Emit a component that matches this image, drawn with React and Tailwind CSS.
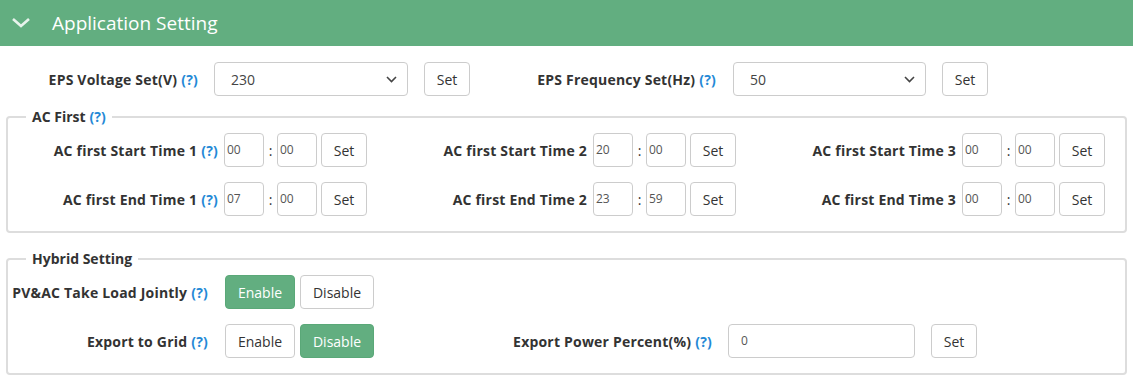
import React, { useState } from 'react';

const Help = () => <span className="ml-1 font-bold text-[#2489d6]">(?)</span>;

const SetButton = ({ className }) => (
  <button className={`h-[34px] w-[46px] rounded border border-[#ccc] bg-white text-[14px] text-[#333] ${className || ''}`}>
    Set
  </button>
);

const Select = ({ value, width }) => (
  <div className={`relative h-[34px] ${width} rounded border border-[#ccc] bg-white`}>
    <span className="absolute left-4 top-[6px] text-[14px] text-[#444]">{value}</span>
    <svg className="absolute right-[10px] top-[13px]" width="11" height="7" viewBox="0 0 11 7">
      <path d="M1 1l4.5 4.5L10 1" fill="none" stroke="#444" strokeWidth="1.6" />
    </svg>
  </div>
);

const TimeBox = ({ value }) => (
  <div className="flex h-[34px] w-[40px] items-center rounded border border-[#ccc] bg-white pl-[2px] text-[12px] text-[#555]">
    {value}
  </div>
);

const TimeItem = ({ label, help, h, m }) => (
  <div className="flex w-[369px] items-center">
    <div className="w-[210px] text-right text-[14px] font-bold tracking-[0.2px] text-[#333]">
      {label}
      {help && <Help />}
    </div>
    <div className="ml-[6px] flex items-center">
      <TimeBox value={h} />
      <span className="w-[13px] text-center text-[14px] text-[#333]">:</span>
      <TimeBox value={m} />
      <SetButton className="ml-[4px]" />
    </div>
  </div>
);

const Toggle = ({ on, setOn }) => (
  <div className="ml-[17px] flex gap-[5px]">
    <button
      onClick={() => setOn(true)}
      className={`h-[34px] w-[70px] rounded border text-[14px] ${on ? 'border-[#5aa878] bg-[#62ae80] text-white' : 'border-[#ccc] bg-white text-[#333]'}`}
    >
      Enable
    </button>
    <button
      onClick={() => setOn(false)}
      className={`h-[34px] w-[74px] rounded border text-[14px] ${!on ? 'border-[#5aa878] bg-[#62ae80] text-white' : 'border-[#ccc] bg-white text-[#333]'}`}
    >
      Disable
    </button>
  </div>
);

export default function App() {
  const [jointly, setJointly] = useState(true);
  const [exportGrid, setExportGrid] = useState(false);

  return (
    <div className="h-[381px] w-[1133px] overflow-hidden bg-white font-['Open_Sans',sans-serif] text-[#333]">
      <div className="flex h-[46px] items-center bg-[#62ae80] text-white">
        <svg className="ml-[11px]" width="20" height="12" viewBox="0 0 20 12">
          <path d="M2 2l8 7 8-7" fill="none" stroke="#e8f3ec" strokeWidth="2.6" />
        </svg>
        <span className="ml-[21px] text-[19px] leading-none">Application Setting</span>
      </div>

      <div className="border-b border-[#e6e6e6] pb-[8px]">
        <div className="mt-4 flex items-center">
          <div className="w-[198px] text-right text-[14px] font-bold tracking-[0.2px]">
            EPS Voltage Set(V)
            <Help />
          </div>
          <div className="ml-4">
            <Select value="230" width="w-[194px]" />
          </div>
          <SetButton className="ml-4" />
          <div className="w-[246px] text-right text-[14px] font-bold tracking-[0.2px]">
            EPS Frequency Set(Hz)
            <Help />
          </div>
          <div className="ml-[17px]">
            <Select value="50" width="w-[193px]" />
          </div>
          <SetButton className="ml-4" />
        </div>

        <fieldset className="mx-[6px] mt-[11px] rounded border-2 border-[#ddd] pb-[15px]">
          <legend className="ml-[18px] px-[6px] text-[14px] font-bold leading-[20px]">
            AC First
            <Help />
          </legend>
          <div className="mt-[6px] flex">
            <TimeItem label="AC first Start Time 1" help h="00" m="00" />
            <TimeItem label="AC first Start Time 2" h="20" m="00" />
            <TimeItem label="AC first Start Time 3" h="00" m="00" />
          </div>
          <div className="mt-[15px] flex">
            <TimeItem label="AC first End Time 1" help h="07" m="00" />
            <TimeItem label="AC first End Time 2" h="23" m="59" />
            <TimeItem label="AC first End Time 3" h="00" m="00" />
          </div>
        </fieldset>

        <fieldset className="mx-[6px] mt-[16px] rounded border-2 border-[#ddd] pb-[15px]">
          <legend className="ml-[18px] px-[6px] text-[14px] font-bold leading-[20px]">Hybrid Setting</legend>
          <div className="mt-[6px] flex items-center">
            <div className="w-[200px] text-right text-[14px] font-bold tracking-[0.2px]">
              PV&amp;AC Take Load Jointly
              <Help />
            </div>
            <Toggle on={jointly} setOn={setJointly} />
          </div>
          <div className="mt-[15px] flex items-center">
            <div className="w-[200px] text-right text-[14px] font-bold tracking-[0.2px]">
              Export to Grid
              <Help />
            </div>
            <Toggle on={exportGrid} setOn={setExportGrid} />
            <div className="w-[338px] text-right text-[14px] font-bold tracking-[0.2px]">
              Export Power Percent(%)
              <Help />
            </div>
            <div className="ml-4 flex h-[34px] w-[187px] items-center rounded border border-[#ccc] bg-white pl-[12px] text-[12px] text-[#555]">
              0
            </div>
            <SetButton className="ml-4" />
          </div>
        </fieldset>
      </div>
    </div>
  );
}
